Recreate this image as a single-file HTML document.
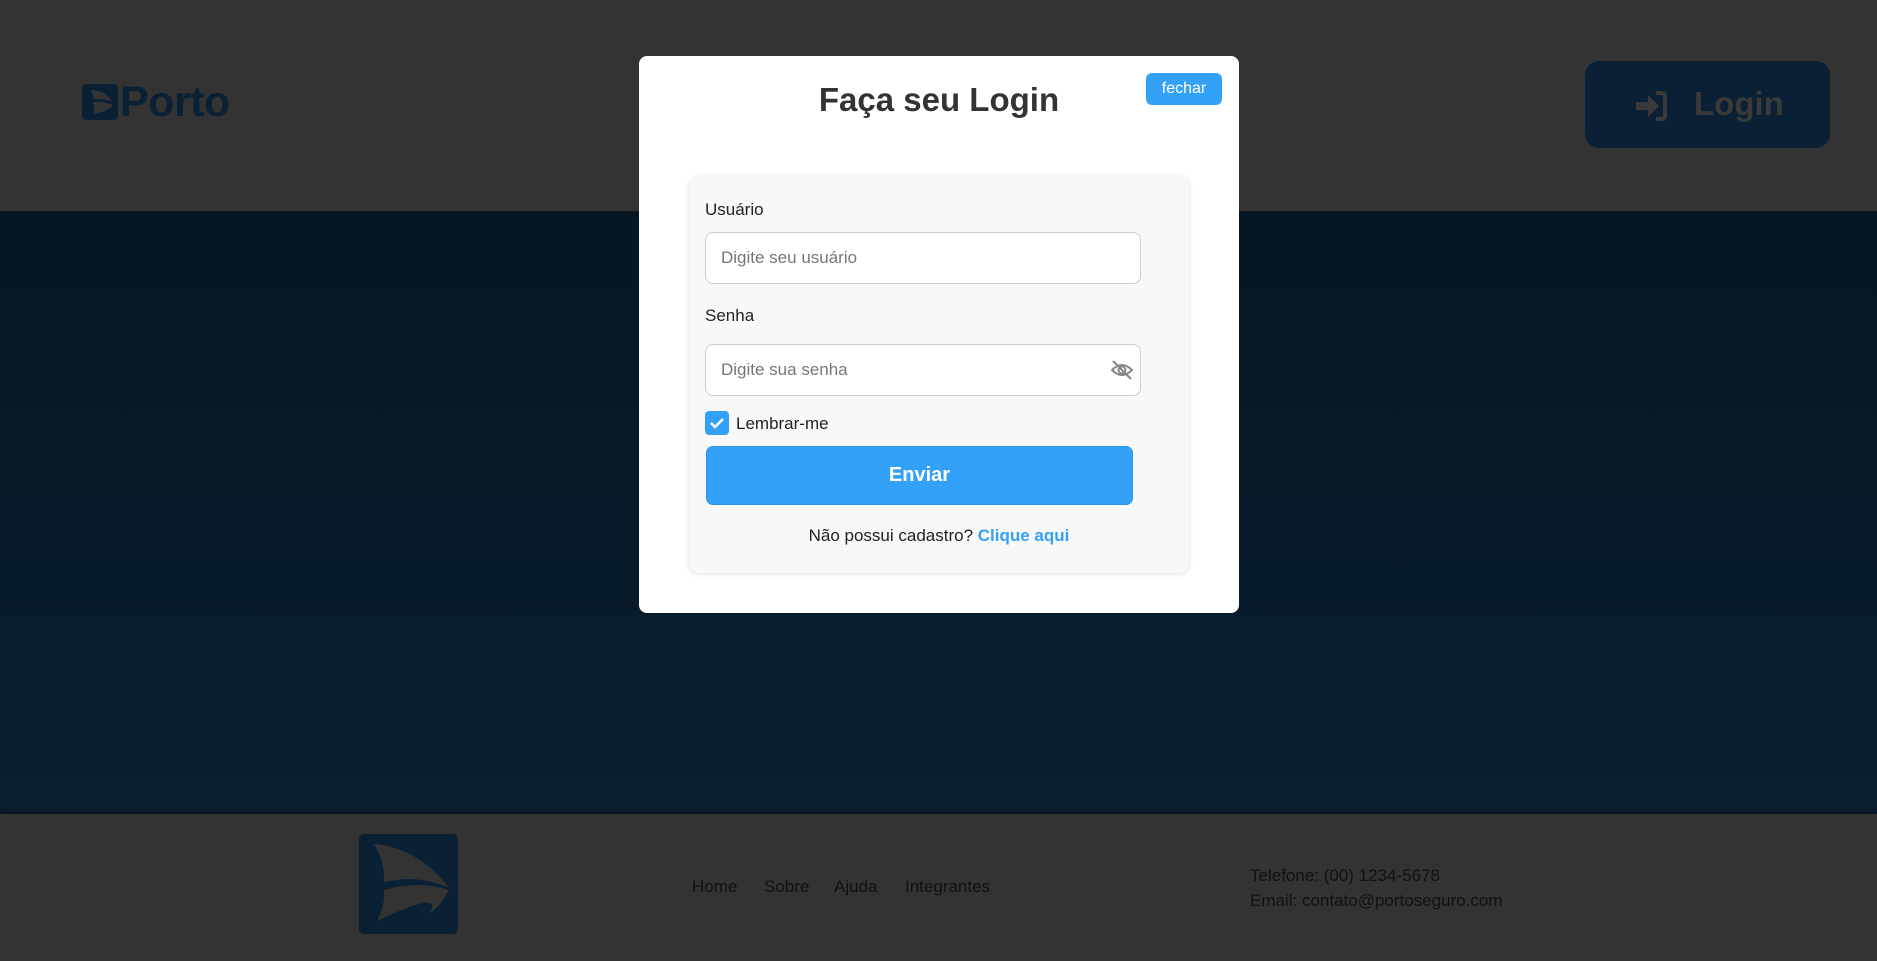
<!DOCTYPE html>
<html><head><meta charset="utf-8"><style>
*{box-sizing:border-box;margin:0;padding:0}
body{width:1877px;height:961px;overflow:hidden;background:#333;font-family:"Liberation Sans",sans-serif;position:relative}
.hdr{position:absolute;left:0;top:0;width:1877px;height:211px;background:#333}
.hero{position:absolute;left:0;top:211px;width:1877px;height:603px;background:linear-gradient(#061622,#0a1e30)}
.ftr{position:absolute;left:0;top:814px;width:1877px;height:147px;background:#333;box-shadow:0 -2px 4px rgba(0,0,0,.4)}
.abs{position:absolute}
.modal{position:absolute;left:639px;top:56px;width:600px;height:557px;background:#fff;border-radius:8px}
.card{position:absolute;left:50px;top:120px;width:500px;height:397px;background:#f8f8f8;border-radius:10px;box-shadow:0 1px 6px rgba(0,0,0,.12)}
.lbl{position:absolute;font-size:17px;color:#222}
.inp{position:absolute;left:16px;width:436px;height:52px;background:#fff;border:1.5px solid #ccc;border-radius:8px;font-size:17px;color:#777;padding:15px 15px}
.nav{position:absolute;top:877px;font-size:17px;color:#111}
</style></head><body>
<div class="hdr"></div>
<div class="hero"></div>
<div class="ftr"></div>
<!-- Porto logo -->
<div class="abs" style="left:82px;top:84px;width:36px;height:36px;background:#0a2034;border-radius:4px"></div>
<svg class="abs" style="left:82px;top:84px" width="36" height="36" viewBox="0 0 36 36"><path d="M8 6 Q24 6 30 18 Q22 14 11 15 Q12 11 8 6Z M11 18 Q22 17 31 21 Q26 27 12 30 Q12 24 11 18Z" fill="#333"/></svg>
<div class="abs" style="left:120px;top:78px;font-size:43px;font-weight:bold;color:#0a2034;letter-spacing:-0.5px">Porto</div>
<!-- Login button -->
<div class="abs" style="left:1585px;top:61px;width:245px;height:87px;background:#0b2034;border-radius:14px"></div>
<svg class="abs" style="left:1634px;top:90px" width="34" height="32" viewBox="0 0 34 32"><path d="M2 12h12V5l11 11-11 11v-7H2z" fill="#3a3a3a"/><path d="M22 3h6a3 3 0 0 1 3 3v20a3 3 0 0 1-3 3h-6" fill="none" stroke="#3a3a3a" stroke-width="4"/></svg>
<div class="abs" style="left:1694px;top:85px;font-size:33px;font-weight:bold;color:#3a3a3a">Login</div>
<!-- Footer -->
<div class="abs" style="left:359px;top:834px;width:99px;height:100px;background:#0a2034;border-radius:5px"></div>
<svg class="abs" style="left:359px;top:834px" width="99" height="100" viewBox="0 0 99 100"><path d="M15 10 Q60 14 90 54 Q60 40 25 48 Q26 28 15 10Z" fill="#333"/><path d="M25 56 Q60 46 90 56 Q82 72 70 80 Q80 65 60 70 Q40 76 18 87 Q26 72 25 56Z" fill="#333"/></svg>
<div class="nav" style="left:692px">Home</div>
<div class="nav" style="left:764px">Sobre</div>
<div class="nav" style="left:834px">Ajuda</div>
<div class="nav" style="left:905px">Integrantes</div>
<div class="abs" style="left:1250px;top:863px;font-size:17px;color:#111;line-height:25px">Telefone: (00) 1234-5678<br>Email: contato@portoseguro.com</div>
<!-- Modal -->
<div class="modal">
<div class="abs" style="left:0;width:600px;top:25px;text-align:center;font-size:33px;font-weight:bold;color:#333">Faça seu Login</div>
<div class="abs" style="left:507px;top:17px;width:76px;height:32px;background:#33a1f8;border-radius:6px;color:#fff;font-size:16px;text-align:center;line-height:32px">fechar</div>
<div class="card">
<div class="lbl" style="left:16px;top:24px">Usuário</div>
<div class="inp" style="top:56px">Digite seu usuário</div>
<div class="lbl" style="left:16px;top:130px">Senha</div>
<div class="inp" style="top:168px">Digite sua senha</div>
<svg class="abs" style="left:421px;top:183px" width="24" height="22" viewBox="0 0 24 22"><path d="M2 11 Q12 1 22 11 Q12 21 2 11Z" fill="none" stroke="#888" stroke-width="2"/><circle cx="12" cy="11" r="3.5" fill="none" stroke="#888" stroke-width="2"/><path d="M3 2 L21 20" stroke="#888" stroke-width="2"/></svg>
<div class="abs" style="left:16px;top:235px;width:24px;height:24px;background:#33a1f8;border-radius:4px"></div>
<svg class="abs" style="left:16px;top:235px" width="24" height="24" viewBox="0 0 24 24"><path d="M6 12l4 4 8-8" fill="none" stroke="#fff" stroke-width="2.5"/></svg>
<div class="lbl" style="left:47px;top:238px">Lembrar-me</div>
<div class="abs" style="left:17px;top:270px;width:427px;height:59px;background:#33a1f8;border:1px solid #2e95e6;border-radius:7px;color:#fff;font-size:20px;font-weight:bold;text-align:center;line-height:57px">Enviar</div>
<div class="abs" style="left:0;width:500px;top:350px;text-align:center;font-size:17px;color:#222">Não possui cadastro? <b style="color:#33a1f8">Clique aqui</b></div>
</div>
</div>
</body></html>
